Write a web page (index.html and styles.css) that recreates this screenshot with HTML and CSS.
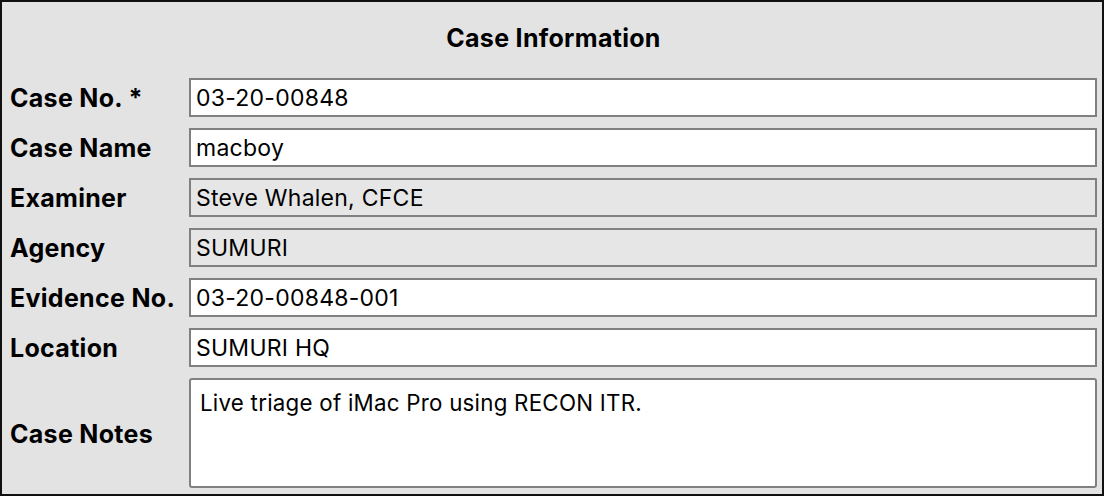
FILE: index.html
```html
<!DOCTYPE html>
<html>
<head>
<meta charset="utf-8">
<link rel="stylesheet" href="styles.css">
</head>
<body>
<div class="panel">
  <h1 class="title">Case Information</h1>
  <div class="form">
    <div class="label">Case No. *</div>
    <div class="field">03-20-00848</div>
    <div class="label">Case Name</div>
    <div class="field">macboy</div>
    <div class="label">Examiner</div>
    <div class="field readonly">Steve Whalen, CFCE</div>
    <div class="label">Agency</div>
    <div class="field readonly">SUMURI</div>
    <div class="label">Evidence No.</div>
    <div class="field">03-20-00848-001</div>
    <div class="label">Location</div>
    <div class="field">SUMURI HQ</div>
    <div class="label">Case Notes</div>
    <div class="field notes">Live triage of iMac Pro using RECON ITR.</div>
  </div>
</div>
</body>
</html>
```

FILE: styles.css
```css
html, body {
  margin: 0;
  padding: 0;
  background: #e3e3e3;
}
.panel {
  box-sizing: border-box;
  width: 1104px;
  height: 496px;
  border: 2px solid #111;
  background: #e3e3e3;
  padding: 0 5px 0 8px;
  font-family: Inter, "Liberation Sans", sans-serif;
  color: #000;
}
.title {
  margin: 0;
  height: 76px;
  line-height: 72px;
  text-align: center;
  font-size: 25px;
  font-weight: 700;
  letter-spacing: 0.3px;
}
.form {
  display: grid;
  grid-template-columns: 179px 1fr;
  row-gap: 11px;
  align-items: center;
}
.label {
  font-size: 25px;
  font-weight: 700;
  letter-spacing: 0.3px;
  white-space: nowrap;
  padding-top: 1px;
}
.field {
  box-sizing: border-box;
  height: 39px;
  border: 2px solid #808080;
  background: #fff;
  padding: 1px 5px 0;
  font-size: 23px;
  line-height: 35px;
  letter-spacing: 0.25px;
}
.field.readonly {
  background: #e6e6e6;
}
.field.notes {
  height: 110px;
  line-height: 28px;
  padding: 9px 9px;
  font-size: 22.3px;
  border-radius: 3px;
}
```
